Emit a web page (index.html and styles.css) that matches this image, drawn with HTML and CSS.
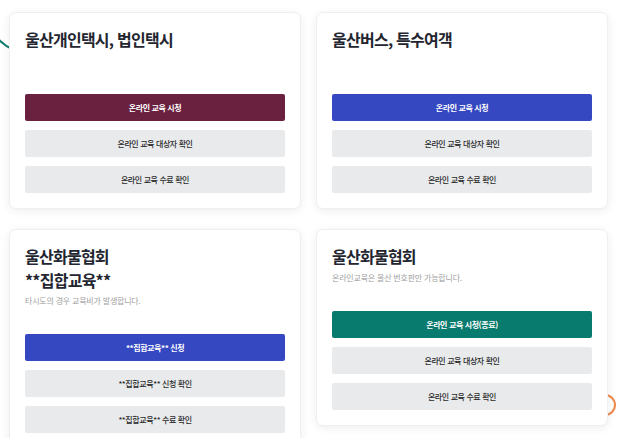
FILE: index.html
```html
<!DOCTYPE html>
<html lang="ko">
<head>
<meta charset="utf-8">
<title>교육 안내</title>
<link rel="stylesheet" href="styles.css">
</head>
<body>
<div class="deco deco-teal"></div>
<div class="deco deco-orange"></div>
<main class="grid">
  <section class="card">
    <div class="card-head">
      <h2 class="card-title">울산개인택시, 법인택시</h2>
    </div>
    <div class="actions">
      <a class="btn btn-maroon">온라인 교육 시청</a>
      <a class="btn btn-grey">온라인 교육 대상자 확인</a>
      <a class="btn btn-grey">온라인 교육 수료 확인</a>
    </div>
  </section>
  <section class="card">
    <div class="card-head">
      <h2 class="card-title">울산버스, 특수여객</h2>
    </div>
    <div class="actions">
      <a class="btn btn-blue">온라인 교육 시청</a>
      <a class="btn btn-grey">온라인 교육 대상자 확인</a>
      <a class="btn btn-grey">온라인 교육 수료 확인</a>
    </div>
  </section>
  <section class="card">
    <div class="card-head">
      <h2 class="card-title">울산화물협회<br>**집합교육**</h2>
      <p class="card-desc">타시도의 경우 교육비가 발생합니다.</p>
    </div>
    <div class="actions">
      <a class="btn btn-blue">**집합교육** 신청</a>
      <a class="btn btn-grey">**집합교육** 신청 확인</a>
      <a class="btn btn-grey">**집합교육** 수료 확인</a>
    </div>
  </section>
  <section class="card">
    <div class="card-head">
      <h2 class="card-title">울산화물협회</h2>
      <p class="card-desc">온라인교육은 울산 번호판만 가능합니다.</p>
    </div>
    <div class="actions">
      <a class="btn btn-teal">온라인 교육 시청(종료)</a>
      <a class="btn btn-grey">온라인 교육 대상자 확인</a>
      <a class="btn btn-grey">온라인 교육 수료 확인</a>
    </div>
  </section>
</main>
</body>
</html>
```
FILE: styles.css
```css
* { box-sizing: border-box; }
html, body { margin: 0; padding: 0; }
body {
  background: #ffffff;
  font-family: "Noto Sans CJK KR", "Noto Sans", sans-serif;
  color: #222;
  position: relative;
  overflow: hidden;
  height: 438px;
}
.deco {
  position: absolute;
  border-radius: 50%;
  z-index: 0;
}
.deco-teal {
  left: -14px;
  top: -34px;
  width: 88px;
  height: 88px;
  border: 2px solid transparent;
  border-left-color: #127d6f;
  border-bottom-color: #127d6f;
}
.deco-orange {
  left: 594px;
  top: 394px;
  width: 22px;
  height: 22px;
  border: 2px solid #ef8a4f;
}
.grid {
  position: relative;
  z-index: 1;
  display: grid;
  grid-template-columns: 292px 292px;
  column-gap: 15px;
  row-gap: 20px;
  align-items: start;
  padding: 12px 9px;
}
.card {
  background: #fff;
  border-radius: 7px;
  border: 1px solid #efefef;
  box-shadow: 0 2px 10px rgba(0, 0, 0, 0.07);
  padding: 15px 15px 15px;
}
.card-head {
  min-height: 66px;
  padding-bottom: 27px;
}
.card-title {
  margin: 0;
  font-size: 16px;
  line-height: 23.5px;
  font-weight: 700;
  letter-spacing: -0.75px;
  color: #232630;
}
.card-desc {
  margin: 3px 0 0;
  font-size: 8px;
  line-height: 11.6px;
  color: #a0a0a0;
  letter-spacing: -0.2px;
}
.actions {
  display: flex;
  flex-direction: column;
  gap: 9px;
}
.btn {
  display: flex;
  align-items: center;
  justify-content: center;
  height: 27px;
  border-radius: 2px;
  font-size: 8px;
  letter-spacing: -0.4px;
  font-weight: 500;
  color: #2b2b2b;
  text-decoration: none;
}
.btn-grey { background: #e9eaec; }
.btn-maroon { background: #6a213f; color: #fff; font-weight: 700; }
.btn-blue { background: #3548c2; color: #fff; font-weight: 700; }
.btn-teal { background: #097a6e; color: #fff; font-weight: 700; }
```
